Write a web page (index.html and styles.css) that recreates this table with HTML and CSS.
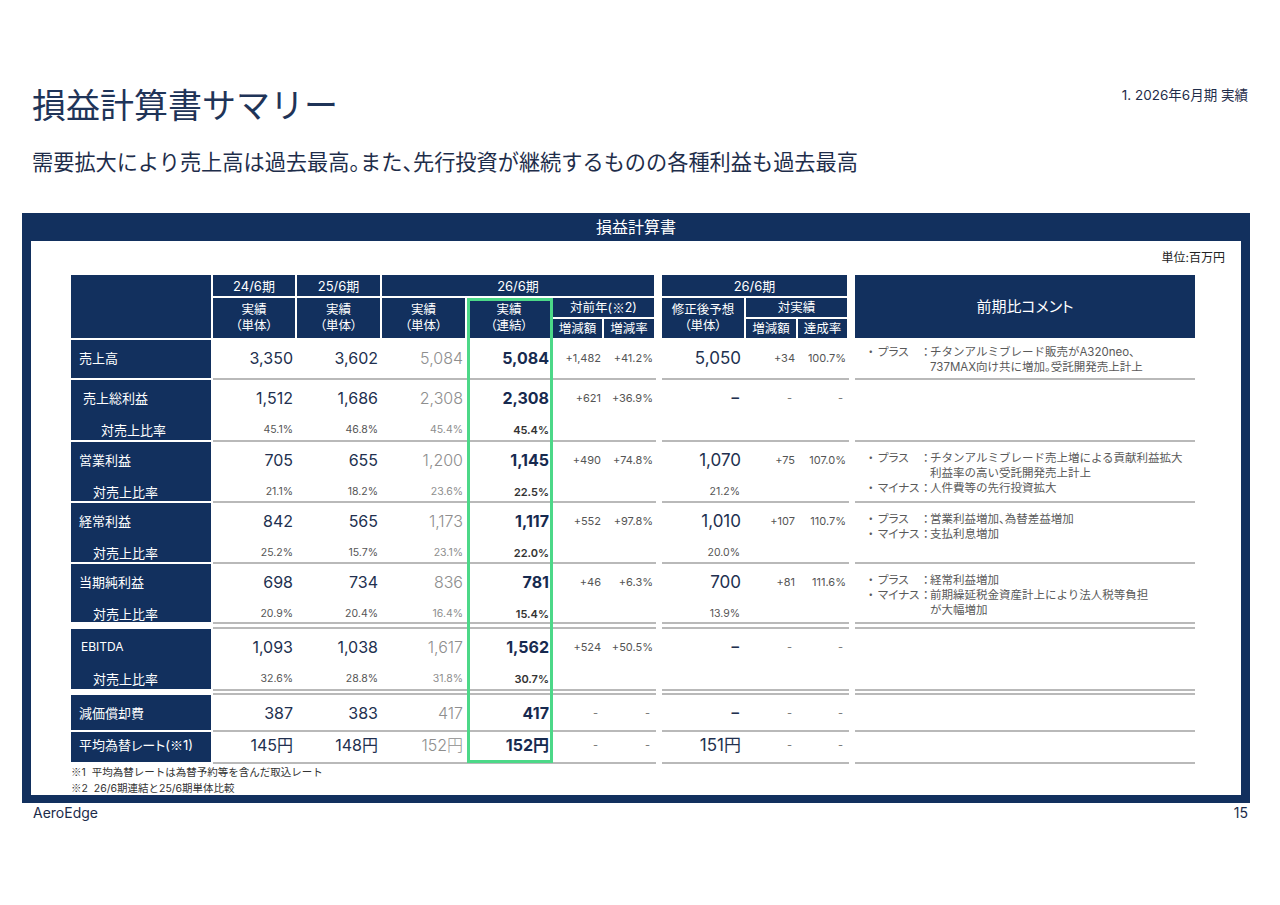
FILE: index.html
```html
<!DOCTYPE html>
<html lang="ja">
<head>
<meta charset="utf-8">
<title>損益計算書サマリー</title>
<link rel="stylesheet" href="styles.css">
</head>
<body>
<header class="top">
  <h1 class="title">損益計算書サマリー</h1>
  <div class="chapter">1. 2026年6月期 実績</div>
</header>
<p class="lead">需要拡大により売上高は過去最高<span class="hp">。</span>また<span class="hp">、</span>先行投資が継続するものの各種利益も過去最高</p>

<section class="frame">
  <div class="band">損益計算書</div>
  <div class="inner">
    <div class="unit">単位:百万円</div>
    <div class="tbl">
      <div class="hdr">
        <div class="h-lab"></div>
        <div class="h-c2">24/6期</div>
        <div class="h-c3">25/6期</div>
        <div class="h-p26">26/6期</div>
        <div class="h-a2">実績<br>（単体）</div>
        <div class="h-a3">実績<br>（単体）</div>
        <div class="h-a4">実績<br>（単体）</div>
        <div class="h-a5">実績<br>（連結）</div>
        <div class="h-yoy">対前年(<span class="jp">※</span>2)</div>
        <div class="h-y1">増減額</div>
        <div class="h-y2">増減率</div>
        <div class="h-f26">26/6期</div>
        <div class="h-fc">修正後予想<br>（単体）</div>
        <div class="h-vs">対実績</div>
        <div class="h-v1">増減額</div>
        <div class="h-v2">達成率</div>
        <div class="h-cm">前期比コメント</div>
      </div>

      <div class="row g1">
        <div class="lab"><div class="m">売上高</div></div>
        <div class="c"><div class="m">3,350</div></div>
        <div class="c"><div class="m">3,602</div></div>
        <div class="c gr"><div class="m">5,084</div></div>
        <div class="c b"><div class="m">5,084</div></div>
        <div class="c sm"><div class="m">+1,482</div></div>
        <div class="c sm"><div class="m">+41.2%</div></div>
        <div class="gap"></div>
        <div class="c fc"><div class="m">5,050</div></div>
        <div class="c sm"><div class="m">+34</div></div>
        <div class="c sm"><div class="m">100.7%</div></div>
        <div class="gap"></div>
        <div class="cm first">
          <div class="ci"><span>・</span><span class="cl">プラス</span><span>：</span><span>チタンアルミブレード販売がA320neo、<br>737MAX向け共に増加<span class="hp">。</span>受託開発売上計上</span></div>
        </div>
      </div>

      <div class="row g2">
        <div class="lab"><div class="m">売上総利益</div><div class="s">対売上比率</div></div>
        <div class="c"><div class="m">1,512</div><div class="s">45.1%</div></div>
        <div class="c"><div class="m">1,686</div><div class="s">46.8%</div></div>
        <div class="c gr"><div class="m">2,308</div><div class="s">45.4%</div></div>
        <div class="c b"><div class="m">2,308</div><div class="s">45.4%</div></div>
        <div class="c sm"><div class="m">+621</div></div>
        <div class="c sm"><div class="m">+36.9%</div></div>
        <div class="gap"></div>
        <div class="c fc"><div class="m dash">–</div></div>
        <div class="c sm ds"><div class="m">-</div></div>
        <div class="c sm ds"><div class="m">-</div></div>
        <div class="gap"></div>
        <div class="cm"></div>
      </div>

      <div class="row g3">
        <div class="lab"><div class="m">営業利益</div><div class="s">対売上比率</div></div>
        <div class="c"><div class="m">705</div><div class="s">21.1%</div></div>
        <div class="c"><div class="m">655</div><div class="s">18.2%</div></div>
        <div class="c gr"><div class="m">1,200</div><div class="s">23.6%</div></div>
        <div class="c b"><div class="m">1,145</div><div class="s">22.5%</div></div>
        <div class="c sm"><div class="m">+490</div></div>
        <div class="c sm"><div class="m">+74.8%</div></div>
        <div class="gap"></div>
        <div class="c fc"><div class="m">1,070</div><div class="s">21.2%</div></div>
        <div class="c sm"><div class="m">+75</div></div>
        <div class="c sm"><div class="m">107.0%</div></div>
        <div class="gap"></div>
        <div class="cm">
          <div class="ci"><span>・</span><span class="cl">プラス</span><span>：</span><span>チタンアルミブレード売上増による貢献利益拡大<br>利益率の高い受託開発売上計上</span></div>
          <div class="ci"><span>・</span><span class="cl">マイナス</span><span>：</span><span>人件費等の先行投資拡大</span></div>
        </div>
      </div>

      <div class="row g4">
        <div class="lab"><div class="m">経常利益</div><div class="s">対売上比率</div></div>
        <div class="c"><div class="m">842</div><div class="s">25.2%</div></div>
        <div class="c"><div class="m">565</div><div class="s">15.7%</div></div>
        <div class="c gr"><div class="m">1,173</div><div class="s">23.1%</div></div>
        <div class="c b"><div class="m">1,117</div><div class="s">22.0%</div></div>
        <div class="c sm"><div class="m">+552</div></div>
        <div class="c sm"><div class="m">+97.8%</div></div>
        <div class="gap"></div>
        <div class="c fc"><div class="m">1,010</div><div class="s">20.0%</div></div>
        <div class="c sm"><div class="m">+107</div></div>
        <div class="c sm"><div class="m">110.7%</div></div>
        <div class="gap"></div>
        <div class="cm">
          <div class="ci"><span>・</span><span class="cl">プラス</span><span>：</span><span>営業利益増加<span class="hp">、</span>為替差益増加</span></div>
          <div class="ci"><span>・</span><span class="cl">マイナス</span><span>：</span><span>支払利息増加</span></div>
        </div>
      </div>

      <div class="row g5">
        <div class="lab"><div class="m">当期純利益</div><div class="s">対売上比率</div></div>
        <div class="c"><div class="m">698</div><div class="s">20.9%</div></div>
        <div class="c"><div class="m">734</div><div class="s">20.4%</div></div>
        <div class="c gr"><div class="m">836</div><div class="s">16.4%</div></div>
        <div class="c b"><div class="m">781</div><div class="s">15.4%</div></div>
        <div class="c sm"><div class="m">+46</div></div>
        <div class="c sm"><div class="m">+6.3%</div></div>
        <div class="gap"></div>
        <div class="c fc"><div class="m">700</div><div class="s">13.9%</div></div>
        <div class="c sm"><div class="m">+81</div></div>
        <div class="c sm"><div class="m">111.6%</div></div>
        <div class="gap"></div>
        <div class="cm">
          <div class="ci"><span>・</span><span class="cl">プラス</span><span>：</span><span>経常利益増加</span></div>
          <div class="ci"><span>・</span><span class="cl">マイナス</span><span>：</span><span>前期繰延税金資産計上により法人税等負担<br>が大幅増加</span></div>
        </div>
      </div>

      <div class="row g6 tb">
        <div class="lab ebitda"><div class="m">EBITDA</div><div class="s">対売上比率</div></div>
        <div class="c"><div class="m">1,093</div><div class="s">32.6%</div></div>
        <div class="c"><div class="m">1,038</div><div class="s">28.8%</div></div>
        <div class="c gr"><div class="m">1,617</div><div class="s">31.8%</div></div>
        <div class="c b"><div class="m">1,562</div><div class="s">30.7%</div></div>
        <div class="c sm"><div class="m">+524</div></div>
        <div class="c sm"><div class="m">+50.5%</div></div>
        <div class="gap"></div>
        <div class="c fc"><div class="m dash">–</div></div>
        <div class="c sm ds"><div class="m">-</div></div>
        <div class="c sm ds"><div class="m">-</div></div>
        <div class="gap"></div>
        <div class="cm"></div>
      </div>

      <div class="row g7 tb">
        <div class="lab"><div class="m">減価償却費</div></div>
        <div class="c"><div class="m">387</div></div>
        <div class="c"><div class="m">383</div></div>
        <div class="c gr"><div class="m">417</div></div>
        <div class="c b"><div class="m">417</div></div>
        <div class="c sm ds"><div class="m">-</div></div>
        <div class="c sm ds"><div class="m">-</div></div>
        <div class="gap"></div>
        <div class="c fc"><div class="m dash">–</div></div>
        <div class="c sm ds"><div class="m">-</div></div>
        <div class="c sm ds"><div class="m">-</div></div>
        <div class="gap"></div>
        <div class="cm"></div>
      </div>

      <div class="row g8">
        <div class="lab pl"><div class="m">平均為替レート(<span class="jp">※</span>1)</div></div>
        <div class="c"><div class="m">145円</div></div>
        <div class="c"><div class="m">148円</div></div>
        <div class="c gr"><div class="m">152円</div></div>
        <div class="c b"><div class="m">152円</div></div>
        <div class="c sm ds"><div class="m">-</div></div>
        <div class="c sm ds"><div class="m">-</div></div>
        <div class="gap"></div>
        <div class="c fc"><div class="m">151円</div></div>
        <div class="c sm ds"><div class="m">-</div></div>
        <div class="c sm ds"><div class="m">-</div></div>
        <div class="gap"></div>
        <div class="cm"></div>
      </div>

      <div class="hl"></div>
    </div>
    <div class="notes">
      <div><span class="jp">※</span>1&nbsp; 平均為替レートは為替予約等を含んだ取込レート</div>
      <div><span class="jp">※</span>2&nbsp; 26/6期連結と25/6期単体比較</div>
    </div>
  </div>
</section>

<footer class="foot">
  <span>AeroEdge</span>
  <span>15</span>
</footer>
</body>
</html>
```

FILE: styles.css
```css
* { box-sizing: border-box; margin: 0; padding: 0; }

:root {
  --navy: #12305e;
  --line: #b9b9b9;
  --cols: 142px 84px 85px 85px 86px 51px 52px 6px 84px 52px 51px 6px 340px;
}

body {
  width: 1280px;
  height: 905px;
  overflow: hidden;
  background: #fff;
  font-family: Inter, "Noto Sans CJK JP", sans-serif;
  color: #1c2b4a;
}

.hp { font-feature-settings: "halt"; }
.jp { font-family: "Noto Sans CJK JP", sans-serif; }

.top {
  display: flex;
  justify-content: space-between;
  align-items: flex-start;
  padding: 83px 32px 0 32px;
}

.title {
  font-family: "Noto Sans CJK JP", sans-serif;
  font-size: 34px;
  line-height: 41px;
  font-weight: 400;
  color: #1f3458;
}

.chapter {
  margin-top: 3px;
  font-size: 13.5px;
  line-height: 18px;
  color: #1f2d4a;
}

.lead {
  margin-top: 24px;
  padding-left: 32px;
  font-size: 21.2px;
  line-height: 28px;
  color: #1e2d4a;
}

.frame {
  margin: 37px 30px 0 22px;
  background: var(--navy);
  padding: 0 9px 8px;
}

.band {
  height: 28px;
  line-height: 28px;
  text-align: center;
  color: #fff;
  font-size: 16px;
}

.inner {
  background: #fff;
  height: 554px;
  padding: 9px 16px 0 40px;
}

.unit {
  text-align: right;
  font-size: 12px;
  line-height: 16px;
  color: #222;
}

.tbl {
  position: relative;
  width: 1124px;
  margin-top: 9px;
}

/* header */
.hdr {
  display: grid;
  grid-template-columns: var(--cols);
  grid-template-rows: 23px 21px 21px;
}

.hdr > div {
  background: var(--navy);
  color: #fff;
  border-right: 2px solid #fff;
  border-bottom: 2px solid #fff;
  display: flex;
  align-items: center;
  justify-content: center;
  text-align: center;
  font-size: 12.5px;
  line-height: 16px;
  font-feature-settings: "palt";
}

.hdr .h-c2, .hdr .h-c3, .hdr .h-p26, .hdr .h-f26 { font-size: 13px; }

.h-lab { grid-column: 1; grid-row: 1 / 4; }
.h-c2 { grid-column: 2; grid-row: 1; }
.h-c3 { grid-column: 3; grid-row: 1; }
.h-p26 { grid-column: 4 / 8; grid-row: 1; }
.h-a2 { grid-column: 2; grid-row: 2 / 4; }
.h-a3 { grid-column: 3; grid-row: 2 / 4; }
.h-a4 { grid-column: 4; grid-row: 2 / 4; }
.h-a5 { grid-column: 5; grid-row: 2 / 4; }
.h-yoy { grid-column: 6 / 8; grid-row: 2; }
.h-y1 { grid-column: 6; grid-row: 3; }
.h-y2 { grid-column: 7; grid-row: 3; }
.h-f26 { grid-column: 9 / 12; grid-row: 1; }
.h-fc { grid-column: 9; grid-row: 2 / 4; }
.h-vs { grid-column: 10 / 12; grid-row: 2; }
.h-v1 { grid-column: 10; grid-row: 3; }
.h-v2 { grid-column: 11; grid-row: 3; }
.hdr .h-cm { grid-column: 13; grid-row: 1 / 4; border-right: none; font-size: 15px; }

/* body rows */
.row {
  display: grid;
  grid-template-columns: var(--cols);
}

.row > div {
  border-bottom: 2px solid var(--line);
  padding-top: 8px;
}

.row > .gap { border-bottom: none; }

.row > .lab {
  background: var(--navy);
  color: #fff;
  border-bottom-color: #fff;
  border-right: 2px solid #fff;
  padding-left: 8px;
  font-size: 13px;
  white-space: nowrap;
}

.lab.pl { font-feature-settings: "palt"; }
.lab .s { padding-left: 14px; }

.g1 { height: 40px; }
.g2 { height: 62px; }
.g3, .g4 { height: 61px; }
.g5 { height: 60px; }
.g6 { height: 64px; margin-top: 3px; }
.g7 { height: 39px; margin-top: 2px; }
.g8 { height: 32px; }
.row.g8 > div { padding-top: 3px; }

.tb > div { border-top: 2px solid var(--line); }
.tb > .lab { border-top-color: #fff; }
.tb > .gap { border-top: none; }

.g2 > .lab { padding-left: 12px; }
.g2 > .lab .s { padding-left: 18px; }
.row > .lab.ebitda { padding-left: 10px; }
.lab.ebitda .m { font-size: 12px; }
.lab.ebitda .s { padding-left: 12px; }

.m { height: 20px; line-height: 20px; white-space: nowrap; }
.s { height: 14px; line-height: 14px; margin-top: 15px; white-space: nowrap; }

.c { text-align: right; padding-right: 4px; }
.c .m { font-size: 16px; color: #22304f; }
.c .s { font-size: 10.5px; color: #555; padding-right: 0; }
.c.gr .m { color: #8e8e8e; font-weight: 300; }
.c.gr .s { color: #8e8e8e; }
.c.b .m { font-weight: 700; color: #172a4f; }
.c.b .s { font-weight: 600; color: #333; font-size: 11px; }
.c.sm { padding-right: 3px; }
.c.sm .m { font-size: 11px; color: #555; }
.c.ds { padding-right: 6px; }
.c.ds .m { color: #777; }
.c.fc { padding-right: 5px; }
.c.fc .m { font-size: 17px; }
.c.fc .s { padding-right: 1px; }
.c .m.dash { font-weight: 600; font-size: 15px; padding-right: 2px; }

/* comments */
.cm { padding-left: 10px; }
.row > .cm.first { padding-top: 5px; }
.row.g3 > .cm, .row.g4 > .cm, .row.g5 > .cm { padding-top: 9px; }

.ci {
  display: grid;
  grid-template-columns: 13px 42px 10px 1fr;
  font-size: 11.5px;
  line-height: 15px;
  color: #595959;
}

.ci > span { white-space: nowrap; }
.ci .cl { font-feature-settings: "palt"; }

/* highlight overlay */
.hl {
  position: absolute;
  left: 396px;
  top: 23px;
  width: 86px;
  height: 465px;
  border: 3px solid #4cd888;
  pointer-events: none;
}

.notes {
  font-size: 10.5px;
  line-height: 15px;
  color: #333;
}

.foot {
  display: flex;
  justify-content: space-between;
  padding: 1px 32px 0 33px;
  font-size: 14px;
  line-height: 18px;
  color: #1c2b4a;
}
```
